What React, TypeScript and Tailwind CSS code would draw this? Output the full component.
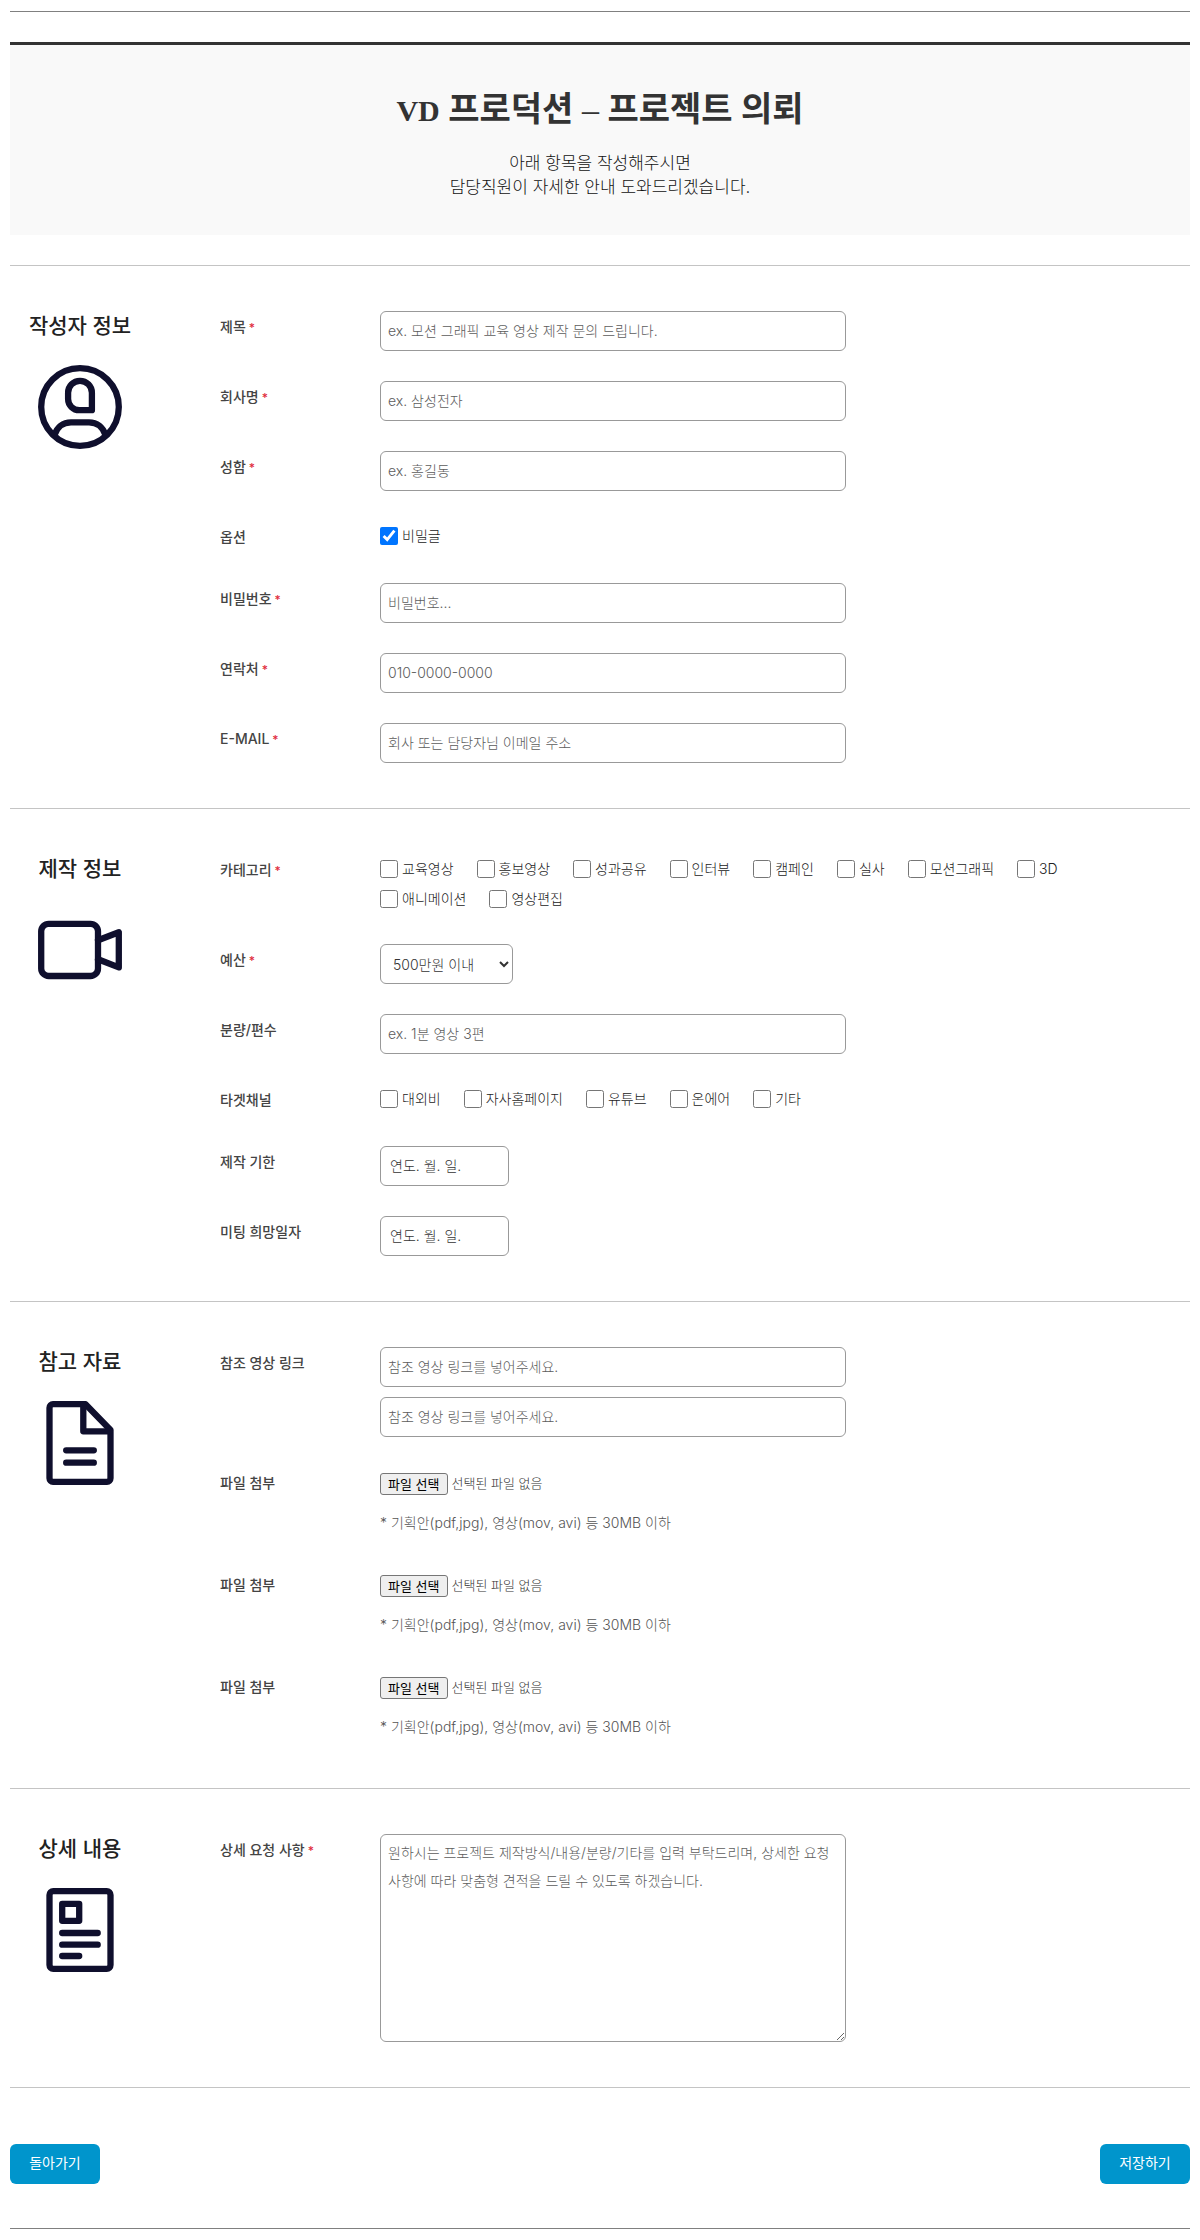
import { useRef, type ReactNode } from 'react'

const inputClass =
  'h-10 w-full rounded-md border border-[#999] bg-white px-[7px] pb-0.5 text-sm font-light text-[#444] placeholder:text-[#5c5c5c]'

const categories = [
  '교육영상', '홍보영상', '성과공유', '인터뷰', '캠페인', '실사', '모션그래픽', '3D', '애니메이션', '영상편집',
]
const channels = ['대외비', '자사홈페이지', '유튜브', '온에어', '기타']
const budgets = ['500만원 이내', '1000만원 이내', '2000만원 이내', '2000만원 이상']

function UserIcon() {
  return (
    <>
      <circle cx="42" cy="42" r="38.8" />
      <path d="M53.9 45.2V27.7a11.9 11.9 0 0 0-23.8 0V34a11.2 11.2 0 0 0 11.2 11.2Z" />
      <path d="M16.5 70C19 62 25 57.3 33 57.3H51C59 57.3 65 62 67.5 70" />
    </>
  )
}

function CameraIcon() {
  return (
    <>
      <rect x="3.2" y="15.8" width="56.8" height="52.2" rx="7.5" />
      <path d="M60 32.3 80.8 24.2V59.4L60 51.3" />
    </>
  )
}

function FileIcon() {
  return (
    <>
      <path d="M15 3.2H47.5L72.5 29V77.3a3.5 3.5 0 0 1-3.5 3.5H15a3.5 3.5 0 0 1-3.5-3.5V6.7A3.5 3.5 0 0 1 15 3.2Z" />
      <path d="M45.3 4V30.3H71.5M28.2 49.3H55.8M28.2 61.7H55.8" />
    </>
  )
}

function ArticleIcon() {
  return (
    <>
      <rect x="11.5" y="3.2" width="61" height="77.6" rx="3.8" />
      <rect x="24.2" y="15.8" width="17" height="17" />
      <path d="M24.2 45H59.7M24.2 56.7H59.7M24.2 68H41.2" />
    </>
  )
}

function Section({ title, icon, children }: { title: string; icon: ReactNode; children: ReactNode }) {
  return (
    <section className="flex gap-[70px] border-t border-[#c4c4c4] py-[45px]">
      <div className="flex w-[140px] shrink-0 flex-col items-center gap-6">
        <h2 className="text-[21px] leading-[30px] font-medium text-[#222]">{title}</h2>
        <svg
          viewBox="0 0 84 84"
          className="h-[84px] w-[84px] text-[#0f0f2d]"
          fill="none"
          stroke="currentColor"
          strokeWidth="6.3"
          strokeLinecap="round"
          strokeLinejoin="round"
          aria-hidden="true"
        >
          {icon}
        </svg>
      </div>
      <div className="flex min-w-0 flex-1 flex-col gap-[30px]">{children}</div>
    </section>
  )
}

type FieldProps = { label: string; id?: string; required?: boolean; children: ReactNode }

function Field({ label, id, required, children }: FieldProps) {
  const content = (
    <>
      {label}
      {required && <span className="ml-[3px] text-xs text-[#e02b3c]">*</span>}
    </>
  )
  const labelClass = 'w-40 shrink-0 text-sm leading-8 font-medium text-[#444]'

  return (
    <div className="flex">
      {id ? (
        <label htmlFor={id} className={labelClass}>{content}</label>
      ) : (
        <span className={labelClass}>{content}</span>
      )}
      <div className="min-w-0 flex-1">{children}</div>
    </div>
  )
}

type TextFieldProps = { label: string; id: string; placeholder: string; type?: string; required?: boolean }

function TextField({ label, id, placeholder, type = 'text', required }: TextFieldProps) {
  return (
    <Field label={label} id={id} required={required}>
      <div className="max-w-[466px]">
        <input id={id} name={id} type={type} placeholder={placeholder} className={inputClass} />
      </div>
    </Field>
  )
}

function Checks({ name, options, checked = false }: { name: string; options: string[]; checked?: boolean }) {
  return (
    <div className="flex min-h-8 flex-wrap gap-x-[23px] pr-20">
      {options.map((option) => (
        <label key={option} className="flex h-[30px] items-center gap-1 text-sm font-light text-[#222]">
          <input type="checkbox" name={name} value={option} defaultChecked={checked} className="h-[18px] w-[18px]" />
          {option}
        </label>
      ))}
    </div>
  )
}

function DateField({ label, id }: { label: string; id: string }) {
  return (
    <Field label={label} id={id}>
      <div className="w-[129px]">
        <input
          id={id}
          name={id}
          type="text"
          placeholder="연도. 월. 일."
          className="h-10 w-full rounded-md border border-[#999] bg-white px-[9px] pb-0.5 text-sm font-light placeholder:text-[#333]"
        />
      </div>
    </Field>
  )
}

function FileField({ id }: { id: string }) {
  const ref = useRef<HTMLInputElement>(null)

  return (
    <Field label="파일 첨부" id={id}>
      <div className="h-[72px]">
        <input ref={ref} id={id} name={id} type="file" className="hidden" />
        <div className="flex h-[34px] items-center gap-1">
          <button
            type="button"
            onClick={() => ref.current?.click()}
            className="h-[22px] rounded-[3px] border border-[#767676] bg-[#efefef] px-[7px] text-[13px] leading-5 text-black"
          >
            파일 선택
          </button>
          <span className="text-[13px] font-light text-[#333]">선택된 파일 없음</span>
        </div>
        <p className="mt-2 text-sm leading-7 font-light text-[#555]">* 기획안(pdf,jpg), 영상(mov, avi) 등 30MB 이하</p>
      </div>
    </Field>
  )
}

export default function App() {
  return (
    <main className="bg-white px-2.5 py-[11px] font-['Inter','Noto_Sans_CJK_KR',sans-serif]">
      <div className="border-y border-[#808080] pt-[30px] pb-11">
        <header className="mb-[30px] border-t-[3px] border-[#333] bg-[#f9f9f9] pt-[41px] pb-9 text-center text-[#333]">
          <h1 className="font-['Liberation_Serif','Noto_Sans_CJK_KR',serif] text-[34px] leading-[48px] font-bold">
            <span className="text-[30px]">VD</span> 프로덕션 <span className="font-normal">–</span> 프로젝트 의뢰
          </h1>
          <p className="mt-4 text-[17px] leading-6 font-light text-[#111]">
            아래 항목을 작성해주시면
            <br />
            담당직원이 자세한 안내 도와드리겠습니다.
          </p>
        </header>

        <form onSubmit={(e) => e.preventDefault()}>
          {/* 작성자 정보 */}
          <Section title="작성자 정보" icon={<UserIcon />}>
            <TextField label="제목" id="title" placeholder="ex. 모션 그래픽 교육 영상 제작 문의 드립니다." required />
            <TextField label="회사명" id="company" placeholder="ex. 삼성전자" required />
            <TextField label="성함" id="name" placeholder="ex. 홍길동" required />
            <Field label="옵션">
              <Checks name="secret" options={['비밀글']} checked />
            </Field>
            <TextField label="비밀번호" id="password" type="password" placeholder="비밀번호..." required />
            <TextField label="연락처" id="tel" type="tel" placeholder="010-0000-0000" required />
            <TextField label="E-MAIL" id="email" type="email" placeholder="회사 또는 담당자님 이메일 주소" required />
          </Section>

          {/* 제작 정보 */}
          <Section title="제작 정보" icon={<CameraIcon />}>
            <Field label="카테고리" required>
              <Checks name="category" options={categories} />
            </Field>
            <Field label="예산" id="budget" required>
              <select
                id="budget"
                name="budget"
                className="block h-10 w-[133px] rounded-md border border-[#999] bg-white pl-2 text-sm font-light text-[#333]"
              >
                {budgets.map((budget) => (
                  <option key={budget}>{budget}</option>
                ))}
              </select>
            </Field>
            <TextField label="분량/편수" id="amount" placeholder="ex. 1분 영상 3편" />
            <Field label="타겟채널">
              <Checks name="channel" options={channels} />
            </Field>
            <DateField label="제작 기한" id="deadline" />
            <DateField label="미팅 희망일자" id="meeting" />
          </Section>

          {/* 참고 자료 */}
          <Section title="참고 자료" icon={<FileIcon />}>
            <Field label="참조 영상 링크" id="link1">
              <div className="flex max-w-[466px] flex-col gap-2.5">
                <input id="link1" type="url" placeholder="참조 영상 링크를 넣어주세요." className={inputClass} />
                <input
                  type="url"
                  aria-label="참조 영상 링크 2"
                  placeholder="참조 영상 링크를 넣어주세요."
                  className={inputClass}
                />
              </div>
            </Field>
            <FileField id="file1" />
            <FileField id="file2" />
            <FileField id="file3" />
          </Section>

          {/* 상세 내용 */}
          <Section title="상세 내용" icon={<ArticleIcon />}>
            <Field label="상세 요청 사항" id="detail" required>
              <textarea
                id="detail"
                name="detail"
                placeholder="원하시는 프로젝트 제작방식/내용/분량/기타를 입력 부탁드리며, 상세한 요청사항에 따라 맞춤형 견적을 드릴 수 있도록 하겠습니다."
                className="block h-52 w-full max-w-[466px] rounded-md border border-[#999] bg-white px-[7px] py-1 text-sm leading-7 font-light text-[#444] placeholder:text-[#5c5c5c]"
              />
            </Field>
          </Section>

          <div className="flex justify-between border-t border-[#c4c4c4] pt-14">
            <button type="button" className="h-10 w-[90px] rounded-md bg-[#0095cc] pb-0.5 text-sm text-white">
              돌아가기
            </button>
            <button type="submit" className="h-10 w-[90px] rounded-md bg-[#0095cc] pb-0.5 text-sm text-white">
              저장하기
            </button>
          </div>
        </form>
      </div>
    </main>
  )
}
